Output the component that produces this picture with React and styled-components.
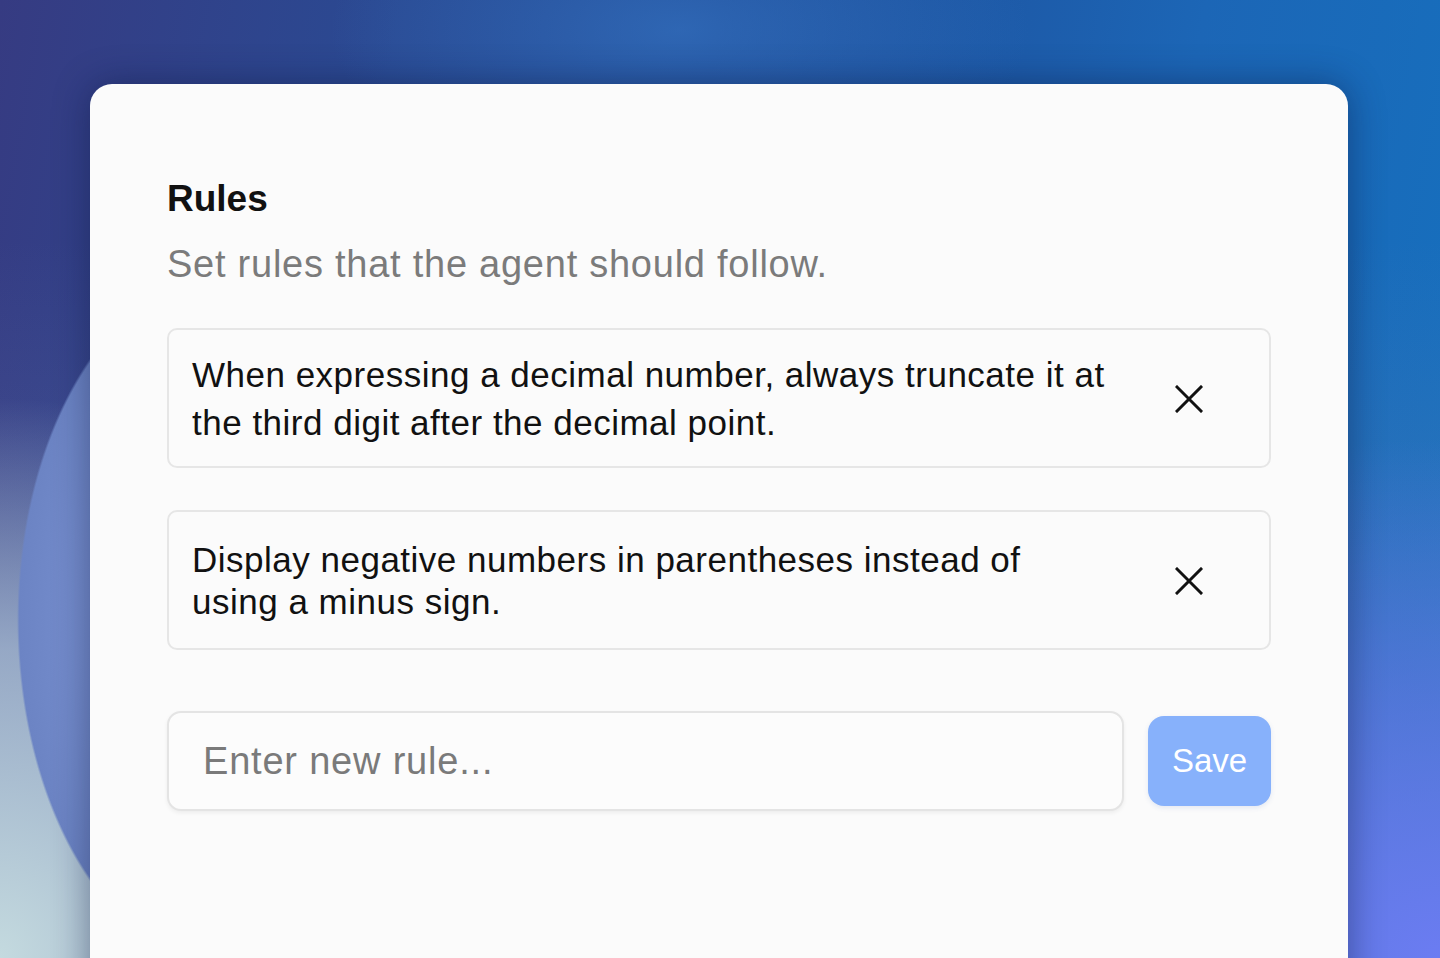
import React, { useState } from "react";
import styled, { createGlobalStyle } from "styled-components";

const GlobalStyle = createGlobalStyle`
  * {
    box-sizing: border-box;
  }

  body {
    margin: 0;
    font-family: "Liberation Sans", Arial, sans-serif;
    overflow: hidden;
  }
`;

// backdrop: blurred blue wallpaper with a pale blob behind the card's left edge
const Page = styled.div`
  height: 958px;
  overflow: hidden;
  padding-top: 84px;
  background:
    radial-gradient(ellipse 215px 350px at 231px 620px, #8aa2db 0%, #7890d0 60%, #6c84c4 98.5%, rgba(108, 132, 196, 0) 99.5%),
    radial-gradient(ellipse 500px 240px at 680px 30px, rgba(60, 130, 210, 0.5), rgba(60, 130, 210, 0) 70%),
    radial-gradient(ellipse 480px 560px at 0px 958px, #c4dadf 0%, rgba(170, 190, 210, 0.8) 55%, rgba(140, 155, 190, 0) 100%),
    radial-gradient(ellipse 600px 520px at 1440px 958px, #6b7cf2 0%, rgba(100, 120, 235, 0.6) 50%, rgba(60, 110, 210, 0) 100%),
    linear-gradient(180deg, rgba(0, 0, 0, 0) 25%, rgba(120, 130, 180, 0.45) 100%),
    linear-gradient(100deg, #363b82 0%, #2a4a93 25%, #1f4a95 45%, #1c66b6 75%, #1571bf 100%);
`;

const Card = styled.section`
  width: 1258px;
  height: 920px;
  margin-left: 90px;
  padding: 94px 77px 0 77px;
  background: #fbfbfb;
  border-radius: 22px;
  box-shadow: 0 0 36px rgba(10, 20, 60, 0.45);
  display: flex;
  flex-direction: column;
`;

const Title = styled.h2`
  margin: 0;
  font-size: 37px;
  font-weight: 700;
  line-height: normal;
  color: #111;
`;

const Subtitle = styled.p`
  margin: 23px 0 42px;
  font-size: 38px;
  line-height: normal;
  letter-spacing: 0.75px;
  color: #7b7b7b;
`;

const RuleList = styled.div`
  display: flex;
  flex-direction: column;
  gap: 42px;
`;

const RuleItem = styled.div`
  min-height: 140px;
  display: flex;
  align-items: center;
  justify-content: space-between;
  padding: 2px 66px 0 23px;
  border: 2px solid #e6e6e6;
  border-radius: 10px;
  background: #fbfbfb;
`;

const RuleText = styled.span`
  max-width: 918px;
  font-size: 35px;
  letter-spacing: 0.5px;
  line-height: ${(p) => p.$lineHeight}px;
  color: #111;
`;

const RemoveButton = styled.button`
  width: 28px;
  height: 28px;
  padding: 0;
  border: none;
  background: none;
  display: flex;
  cursor: pointer;
  color: #111;
`;

const Composer = styled.div`
  margin-top: 61px;
  display: flex;
  align-items: center;
  gap: 24px;
`;

const RuleInput = styled.input`
  flex: 1;
  height: 100px;
  padding: 0 34px;
  border: 2px solid #e4e4e4;
  border-radius: 14px;
  background: #fcfcfc;
  box-shadow: 0 2px 4px rgba(0, 0, 0, 0.06);
  font-family: inherit;
  font-size: 38px;
  letter-spacing: 0.8px;
  color: #222;

  &::placeholder {
    color: #7a7a7a;
  }

  &:focus {
    outline: none;
  }
`;

const SaveButton = styled.button`
  width: 123px;
  height: 90px;
  border: none;
  border-radius: 16px;
  background: #87b1fb;
  box-shadow: 0 2px 5px rgba(60, 100, 180, 0.12);
  font-family: inherit;
  font-size: 33px;
  color: #fff;
  cursor: pointer;
`;

const CloseIcon = () => (
  <svg width="28" height="28" viewBox="0 0 28 28" fill="none">
    <path
      d="M2 2L26 26M26 2L2 26"
      stroke="currentColor"
      strokeWidth="3"
      strokeLinecap="square"
    />
  </svg>
);

const initialRules = [
  {
    id: 1,
    text: "When expressing a decimal number, always truncate it at the third digit after the decimal point.",
    lineHeight: 48,
  },
  {
    id: 2,
    text: "Display negative numbers in parentheses instead of using a minus sign.",
    lineHeight: 42,
  },
];

export default function App() {
  const [rules, setRules] = useState(initialRules);
  const [newRule, setNewRule] = useState("");

  const removeRule = (id) => {
    setRules(rules.filter((rule) => rule.id !== id));
  };

  return (
    <>
      <GlobalStyle />
      <Page>
        <Card>
          <Title>Rules</Title>
          <Subtitle>Set rules that the agent should follow.</Subtitle>
          <RuleList>
            {rules.map((rule) => (
              <RuleItem key={rule.id}>
                <RuleText $lineHeight={rule.lineHeight}>{rule.text}</RuleText>
                <RemoveButton onClick={() => removeRule(rule.id)}>
                  <CloseIcon />
                </RemoveButton>
              </RuleItem>
            ))}
          </RuleList>
          <Composer>
            <RuleInput
              placeholder="Enter new rule..."
              value={newRule}
              onChange={(e) => setNewRule(e.target.value)}
            />
            <SaveButton>Save</SaveButton>
          </Composer>
        </Card>
      </Page>
    </>
  );
}
